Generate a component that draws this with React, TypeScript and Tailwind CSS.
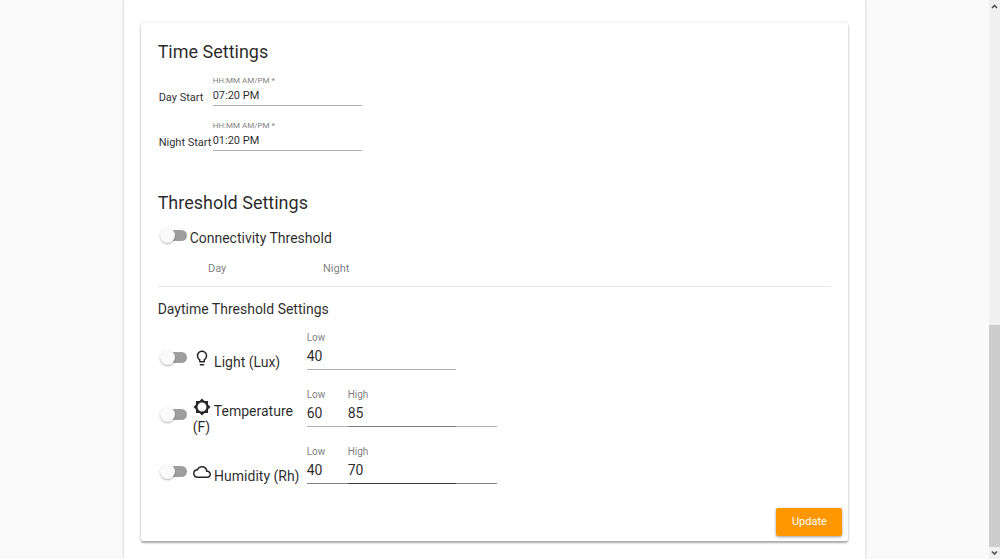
import { useState } from 'react';
import type { IconType } from 'react-icons';
import { MdBrightness5, MdCloudQueue, MdLightbulbOutline } from 'react-icons/md';
import clsx from 'clsx';

type Threshold = {
  name: string;
  icon: IconType;
  low: string;
  high?: string;
  strong?: boolean;
};

const thresholds: Threshold[] = [
  { name: 'Light (Lux)', icon: MdLightbulbOutline, low: '40' },
  { name: 'Temperature (F)', icon: MdBrightness5, low: '60', high: '85' },
  { name: 'Humidity (Rh)', icon: MdCloudQueue, low: '40', high: '70', strong: true }
];

function Toggle({ label }: { label: string }) {
  return (
    <span className="relative flex h-4 w-[27px] shrink-0 items-center">
      <input
        type="checkbox"
        role="switch"
        aria-label={label}
        className="peer ml-auto h-[11px] w-[25px] cursor-pointer appearance-none rounded-full bg-[#9e9e9e] checked:bg-orange-300"
      />
      {/* Thumb */}
      <span className="pointer-events-none absolute left-0 size-[15px] rounded-full bg-[#fafafa] shadow-[0_1px_2px_rgba(0,0,0,0.3)] peer-checked:translate-x-3 peer-checked:bg-orange-500" />
    </span>
  );
}

function TimeField({ name, defaultValue }: { name: string; defaultValue: string }) {
  return (
    <div className="flex items-end">
      <span className="w-[55px] pl-px text-[11px] leading-4 whitespace-nowrap">{name}</span>
      <label className="block w-[149px]">
        <span className="block text-[8px] leading-[10px] text-black/55">HH:MM AM/PM *</span>
        <input
          type="text"
          aria-label={name}
          defaultValue={defaultValue}
          className="mt-0.5 block h-[18px] w-full border-b border-black/30 pb-0.5 text-[11px] outline-none"
        />
      </label>
    </div>
  );
}

function NumberField({ label, defaultValue, strong, className }: {
  label: string;
  defaultValue: string;
  strong?: boolean;
  className: string;
}) {
  return (
    <label className={clsx('row-start-1 block', className)}>
      <span className="block text-[10px] leading-[14px] text-black/55">{label}</span>
      <input
        type="text"
        inputMode="numeric"
        defaultValue={defaultValue}
        className={clsx(
          'block h-[25px] w-full border-b pb-0.5 text-[14px] outline-none',
          strong ? 'border-black/50' : 'border-black/30'
        )}
      />
    </label>
  );
}

function ThresholdRow({ name, icon: Icon, low, high, strong }: Threshold) {
  return (
    <div className="flex h-[57px] items-start">
      <div className="flex h-full w-[149px] items-start pl-0.5">
        <div className="pt-[18px]">
          <Toggle label={name} />
        </div>
        <div className="ml-1.5 flex h-full w-[110px] items-center">
          <span className="text-[14px] leading-4">
            <Icon className="inline size-[18px] align-baseline" /> {name}
          </span>
        </div>
      </div>
      {/* Low and High share the middle column, so their underlines overlap */}
      <div className="grid grid-cols-[41px_108px_41px]">
        <NumberField label="Low" defaultValue={low} strong={strong} className="col-start-1 col-end-3" />
        {high && (
          <NumberField label="High" defaultValue={high} strong={strong} className="col-start-2 col-end-4" />
        )}
      </div>
    </div>
  );
}

export default function App() {
  const [tab, setTab] = useState('Day');

  return (
    <div className="flex min-h-screen bg-[#fafafa] font-[Roboto,sans-serif] text-black/85">
      <main className="flex-1">
        <div className="mx-auto min-h-full w-3/4 bg-white px-[17px] pt-[23px] pb-[17px] shadow-[0_0_3px_rgba(0,0,0,0.22)]">
          <form
            className="rounded-xs pt-[17px] pr-1.5 pb-[5px] pl-[17px] shadow-[0_2px_2px_rgba(0,0,0,0.3),0_0_4px_rgba(0,0,0,0.12)]"
            onSubmit={(e) => e.preventDefault()}
          >
            <h2 className="text-[18px] leading-6">Time Settings</h2>
            <div className="mt-3 flex flex-col gap-[15px]">
              <TimeField name="Day Start" defaultValue="07:20 PM" />
              <TimeField name="Night Start" defaultValue="01:20 PM" />
            </div>

            <h2 className="mt-10 text-[18px] leading-6">Threshold Settings</h2>
            <div className="mt-3 flex items-start pl-0.5">
              <Toggle label="Connectivity Threshold" />
              <span className="ml-[3px] pt-px text-[14px] leading-5">Connectivity Threshold</span>
            </div>

            {/* Tabs */}
            <div role="tablist" className="mr-[11px] flex border-b border-black/10">
              {['Day', 'Night'].map((name) => (
                <button
                  key={name}
                  type="button"
                  role="tab"
                  aria-selected={tab === name}
                  onClick={() => setTab(name)}
                  className="h-[38px] w-[119px] pt-1 text-[11px] text-black/55"
                >
                  {name}
                </button>
              ))}
            </div>

            <h3 className="mt-3 text-[14px] leading-5">{tab}time Threshold Settings</h3>
            <div className="mt-3">
              {thresholds.map((t) => (
                <ThresholdRow key={t.name} {...t} />
              ))}
            </div>

            <div className="mt-1.5 flex justify-end">
              <button
                type="submit"
                className="h-7 w-[66px] rounded-xs bg-[#ff9800] text-[11px] text-white shadow-[0_1px_3px_rgba(0,0,0,0.4)]"
              >
                Update
              </button>
            </div>
          </form>
        </div>
      </main>

      {/* Scrollbar */}
      <aside className="flex w-[11px] flex-col bg-[#f0f0f0]">
        <svg className="h-3 w-full" viewBox="0 0 11 12" fill="none" stroke="#505050" strokeWidth="1.6">
          <path d="M3 8l2.5-2.5L8 8" />
        </svg>
        <div className="grow-[313]" />
        <div className="grow-[222] bg-[#cdcdcd]" />
        <svg className="h-3 w-full" viewBox="0 0 11 12" fill="none" stroke="#505050" strokeWidth="1.6">
          <path d="M3 4.5L5.5 7 8 4.5" />
        </svg>
      </aside>
    </div>
  );
}
